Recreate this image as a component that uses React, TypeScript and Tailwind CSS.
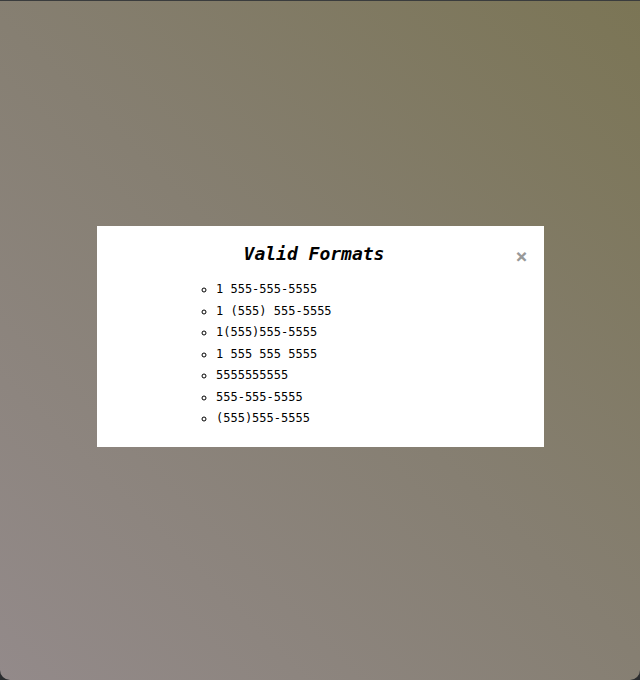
const formats = [
  "1 555-555-5555",
  "1 (555) 555-5555",
  "1(555)555-5555",
  "1 555 555 5555",
  "5555555555",
  "555-555-5555",
  "(555)555-5555",
]

export default function App() {
  return (
    <div className="h-[680px] w-[640px] bg-[#2b2d2f]">
      <div
        className="flex h-full w-full items-center justify-center rounded-b-[10px] border-t border-t-[#3a3c3d] bg-linear-45 from-[#938a8a] via-[#867f72] to-[#7b7555] pb-[8px]"
        style={{ fontFamily: '"DejaVu Sans Mono", "Liberation Mono", monospace' }}
      >
        {/* Modal */}
        <div className="relative w-[447px] bg-white pt-[14px] pb-[17px]">
          <button className="absolute right-[16px] top-[20px] text-[20px] font-black leading-none text-[#999999]">
            ×
          </button>
          <h2 className="pr-[12px] text-center text-[18px] font-bold italic leading-[28px] text-black">
            Valid Formats
          </h2>
          <ul className="mt-[11px] list-[circle] pl-[119.5px] text-[12px] leading-[21.5px] text-black">
            {formats.map((f) => (
              <li key={f}>{f}</li>
            ))}
          </ul>
        </div>
      </div>
    </div>
  )
}
